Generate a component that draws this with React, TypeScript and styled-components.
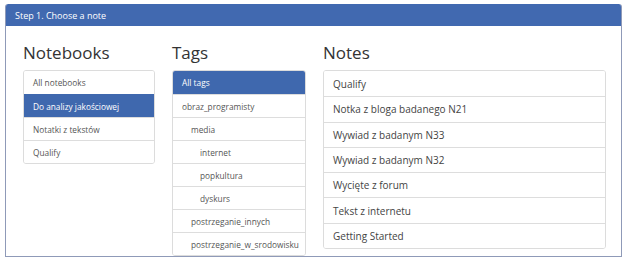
import React from "react";
import styled, { createGlobalStyle } from "styled-components";

const Global = createGlobalStyle`
  html, body { margin: 0; padding: 0; background: #ffffff; }
  body { font-family: "Open Sans", "Liberation Sans", sans-serif; }
`;

const Page = styled.div`
  padding: 4px 6px 0 5px;
`;

const Panel = styled.section`
  border: 1px solid #8f9ab8;
  border-top: none;
  border-radius: 3px 3px 0 0;
  height: 253px;
  box-sizing: border-box;
  overflow: hidden;
`;

const PanelHeader = styled.div`
  background: #4169b0;
  color: #ffffff;
  height: 22px;
  display: flex;
  align-items: center;
  padding-left: 10px;
  font-size: 9px;
  border-radius: 3px 3px 0 0;
  margin: 0 -1px;
`;

const Columns = styled.div`
  display: grid;
  grid-template-columns: 132px 134px 283px;
  column-gap: 17px;
  padding: 16px 0 0 17px;
`;

const Column = styled.div`
  display: flex;
  flex-direction: column;
`;

const Heading = styled.h2`
  margin: 0 0 6px 0;
  font-weight: 400;
  font-size: 17px;
  line-height: 22px;
  color: #333333;
`;

const List = styled.ul`
  list-style: none;
  margin: 0;
  padding: 0;
  border: 1px solid #dcdcdc;
  border-radius: 3px;
  overflow: hidden;
`;

const Item = styled.li<{ $active?: boolean; $indent?: number; $big?: boolean }>`
  height: ${(p) => (p.$big ? 25.3 : 23)}px;
  box-sizing: border-box;
  display: flex;
  align-items: center;
  padding-left: ${(p) => 9 + (p.$indent ?? 0) * 9}px;
  font-size: ${(p) => (p.$big ? 10 : 8.3)}px;
  color: ${(p) => (p.$active ? "#ffffff" : p.$big ? "#444444" : "#555555")};
  background: ${(p) => (p.$active ? "#3f68ae" : "#ffffff")};
  border-top: 1px solid ${(p) => (p.$active ? "#3f68ae" : "#dddddd")};
  white-space: nowrap;
  &:first-child { border-top: none; }
`;

const notebooks = ["All notebooks", "Do analizy jakościowej", "Notatki z tekstów", "Qualify"];
const tags: [string, number][] = [
  ["All tags", 0],
  ["obraz_programisty", 0],
  ["media", 1],
  ["internet", 2],
  ["popkultura", 2],
  ["dyskurs", 2],
  ["postrzeganie_innych", 1],
  ["postrzeganie_w_srodowisku", 1],
];
const notes = [
  "Qualify",
  "Notka z bloga badanego N21",
  "Wywiad z badanym N33",
  "Wywiad z badanym N32",
  "Wycięte z forum",
  "Tekst z internetu",
  "Getting Started",
];

export default function App() {
  return (
    <>
      <Global />
      <Page>
        <Panel>
          <PanelHeader>Step 1. Choose a note</PanelHeader>
          <Columns>
            <Column>
              <Heading>Notebooks</Heading>
              <List>
                {notebooks.map((n, i) => (
                  <Item key={n} $active={i === 1}>{n}</Item>
                ))}
              </List>
            </Column>
            <Column>
              <Heading>Tags</Heading>
              <List>
                {tags.map(([t, ind], i) => (
                  <Item key={t} $active={i === 0} $indent={ind}>{t}</Item>
                ))}
              </List>
            </Column>
            <Column>
              <Heading>Notes</Heading>
              <List>
                {notes.map((n) => (
                  <Item key={n} $big>{n}</Item>
                ))}
              </List>
            </Column>
          </Columns>
        </Panel>
      </Page>
    </>
  );
}
